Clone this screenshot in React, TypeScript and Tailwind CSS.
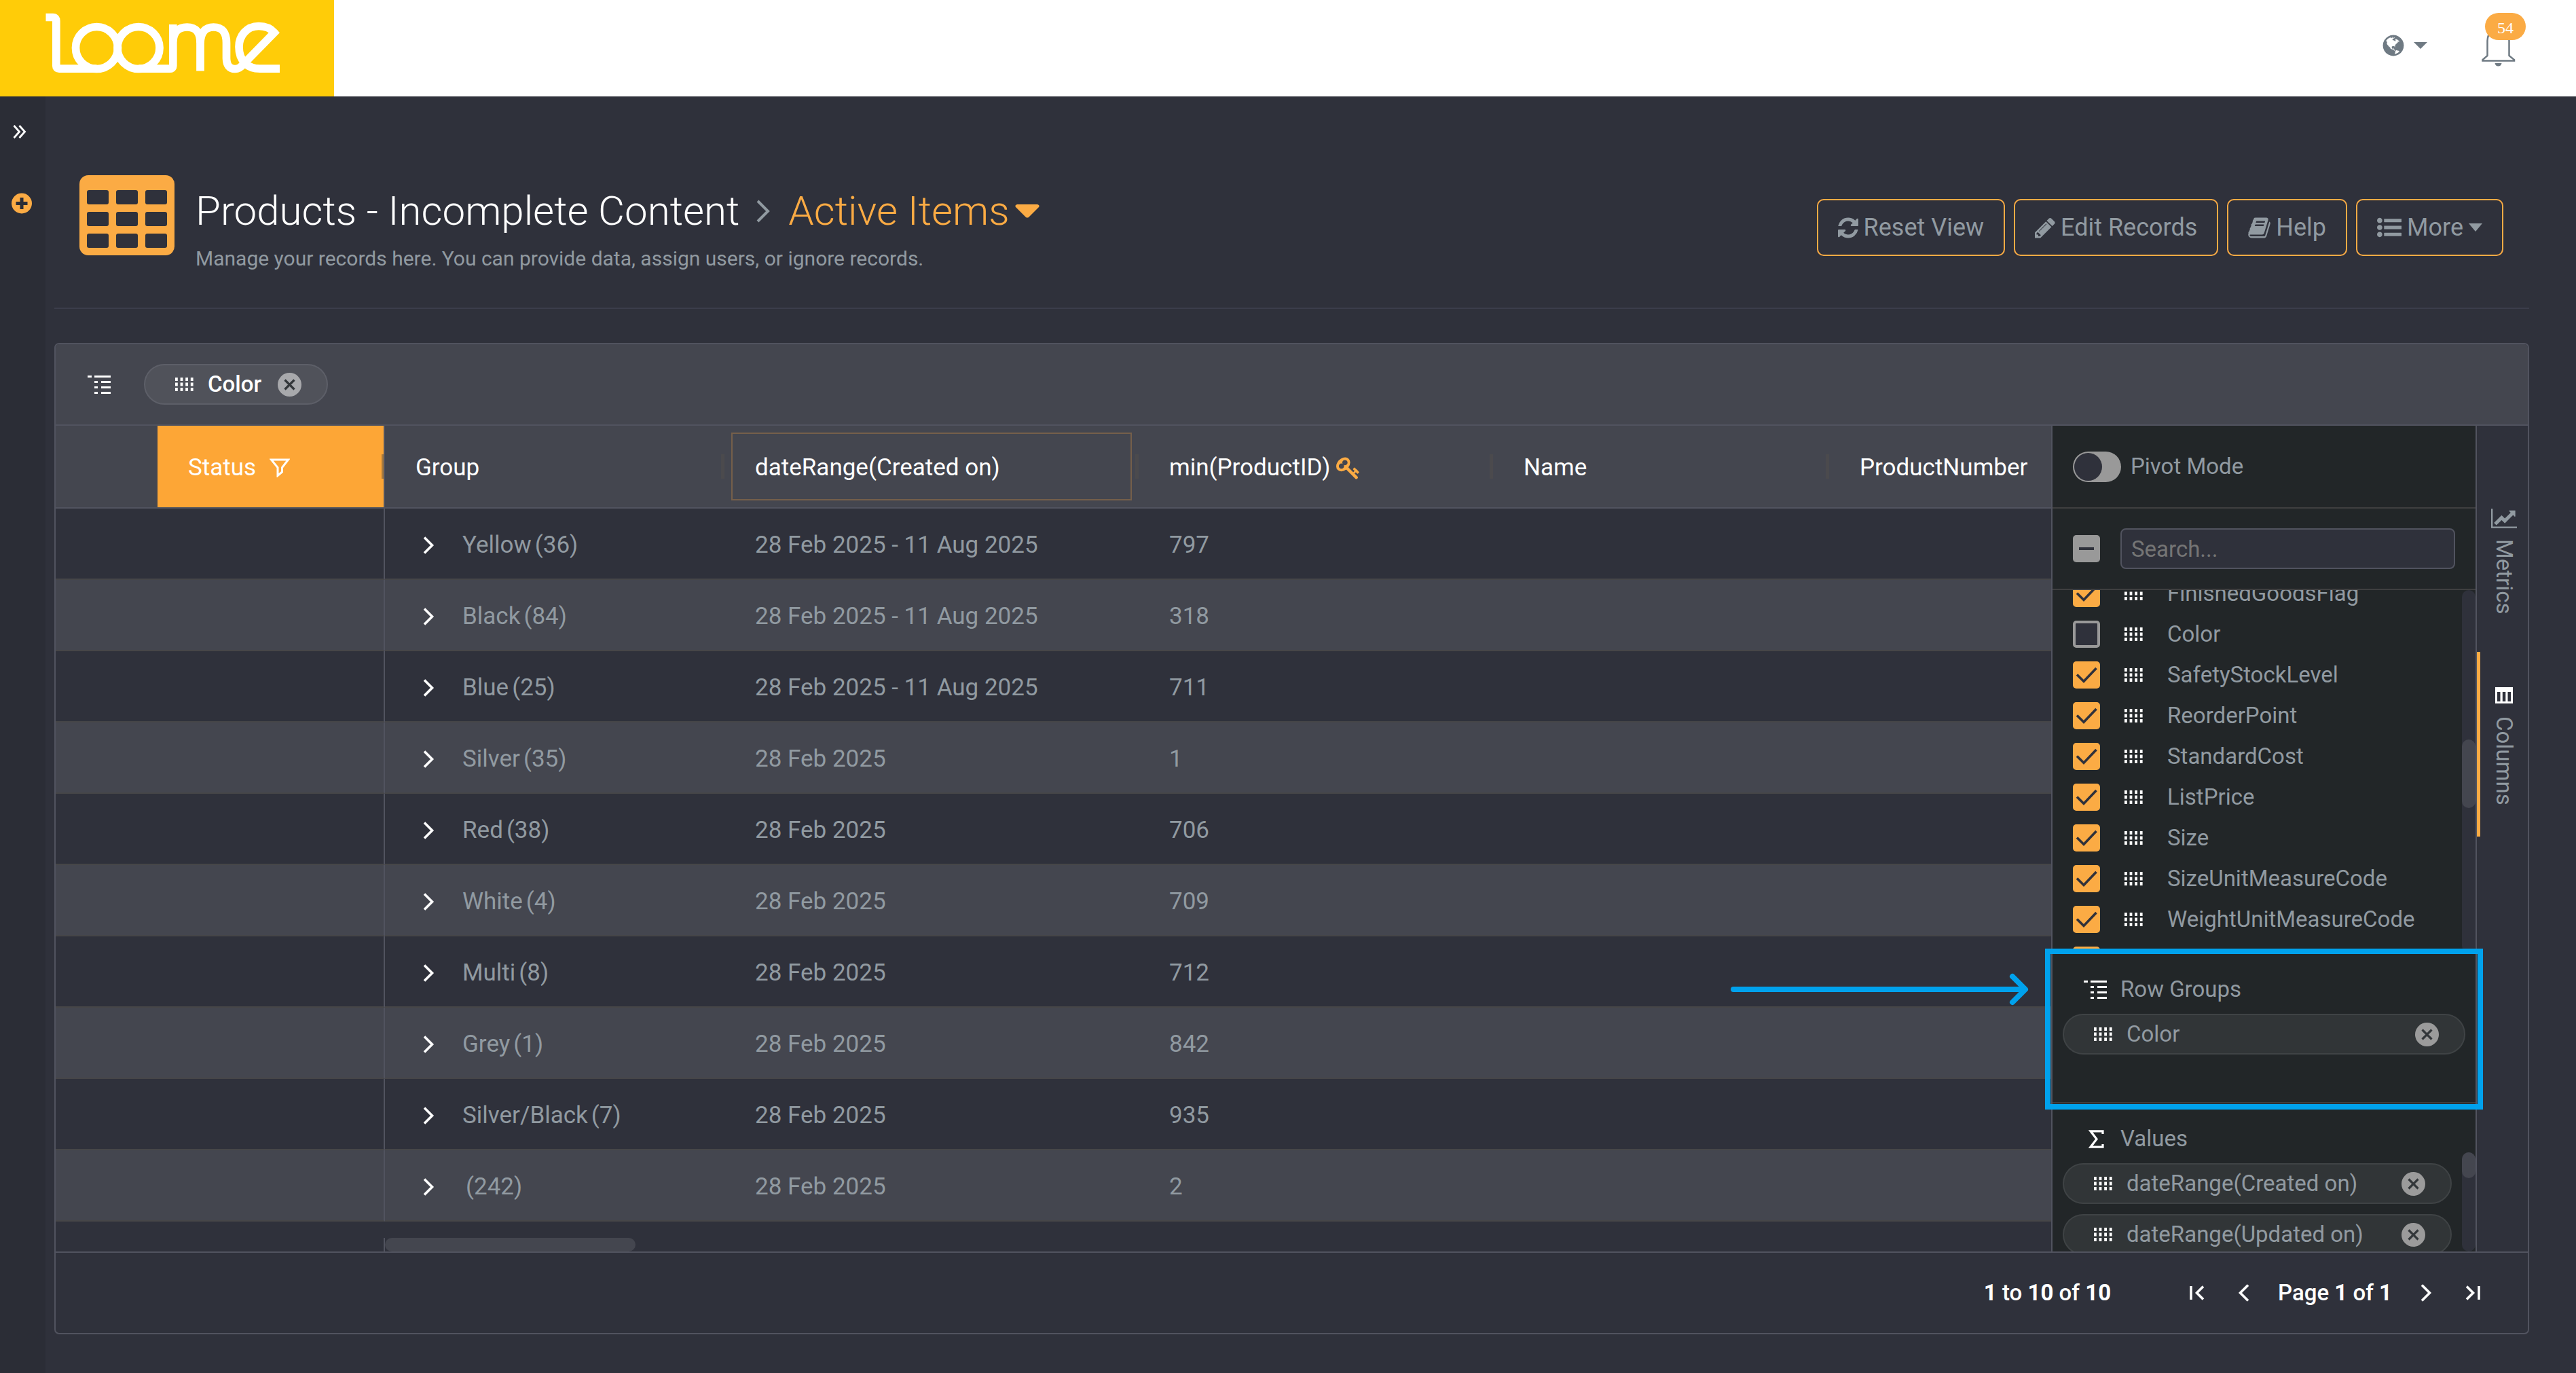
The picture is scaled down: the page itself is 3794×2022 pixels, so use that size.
import { useState } from "react";
import type { ReactNode } from "react";

const FA = {
  refresh:
    "M1639 1056q0 5-1 7-64 268-268 434.5t-478 166.5q-146 0-282.5-55t-243.5-157l-129 129q-19 19-45 19t-45-19-19-45v-448q0-26 19-45t45-19h448q26 0 45 19t19 45-19 45l-137 137q71 66 161 102t187 36q134 0 250-65t186-179q11-17 53-117 8-23 30-23h192q13 0 22.5 9.5t9.5 22.5zm25-800v448q0 26-19 45t-45 19h-448q-26 0-45-19t-19-45 19-45l138-138q-148-137-349-137-134 0-250 65t-186 179q-11 17-53 117-8 23-30 23h-199q-13 0-22.5-9.5t-9.5-22.5v-7q65-268 270-434.5t480-166.5q146 0 284 55.5t245 156.5l130-129q19-19 45-19t45 19 19 45z",
  pencil:
    "M491 1536l91-91-235-235-91 91v107h128v128h107zm523-928q0-22-22-22-10 0-17 7l-542 542q-7 7-7 17 0 22 22 22 10 0 17-7l542-542q7-7 7-17zm-54-192l416 416-832 832h-416v-416zm683 96q0 53-37 90l-166 166-416-416 166-165q36-38 90-38 53 0 91 38l235 234q37 39 37 91z",
  book: "M1703 478q40 57 18 129l-275 906q-19 64-76.5 107.5t-122.5 43.5h-923q-77 0-148.5-53.5t-99.5-131.5q-24-67-2-127 0-4 3-27t4-37q1-8-3-21.5t-3-19.5q2-11 8-21t16.5-23.5 16.5-23.5q23-38 45-91.5t30-91.5q3-10 .5-30t-.5-28q3-11 17-28t17-23q21-36 42-92t25-90q1-9-2.5-32t.5-28q4-13 22-30.5t22-22.5q19-26 42.5-84.5t27.5-96.5q1-8-3-25.5t-2-26.5q2-8 9-18t18-23 17-21q8-12 16.5-30.5t15-35 16-36 19.5-32 26.5-23.5 36-11.5 47.5 5.5l-1 3q38-9 51-9h761q74 0 114 56t18 130l-274 906q-36 119-71.5 153.5t-128.5 34.5h-869q-27 0-38 15-11 16-1 43 24 70 144 70h923q29 0 56-15.5t35-41.5l300-987q7-22 5-57 38 15 59 43zm-1064 2q-4 13 2 22.5t20 9.5h608q13 0 25.5-9.5t16.5-22.5l21-64q4-13-2-22.5t-20-9.5h-608q-13 0-25.5 9.5t-16.5 22.5zm-83 256q-4 13 2 22.5t20 9.5h608q13 0 25.5-9.5t16.5-22.5l21-64q4-13-2-22.5t-20-9.5h-608q-13 0-25.5 9.5t-16.5 22.5z",
  list: "M384 1408q0 80-56 136t-136 56-136-56-56-136 56-136 136-56 136 56 56 136zm0-512q0 80-56 136t-136 56-136-56-56-136 56-136 136-56 136 56 56 136zm1408 416v192q0 13-9.5 22.5t-22.5 9.5h-1216q-13 0-22.5-9.5t-9.5-22.5v-192q0-13 9.5-22.5t22.5-9.5h1216q13 0 22.5 9.5t9.5 22.5zm-1408-928q0 80-56 136t-136 56-136-56-56-136 56-136 136-56 136 56 56 136zm1408 416v192q0 13-9.5 22.5t-22.5 9.5h-1216q-13 0-22.5-9.5t-9.5-22.5v-192q0-13 9.5-22.5t22.5-9.5h1216q13 0 22.5 9.5t9.5 22.5zm0-512v192q0 13-9.5 22.5t-22.5 9.5h-1216q-13 0-22.5-9.5t-9.5-22.5v-192q0-13 9.5-22.5t22.5-9.5h1216q13 0 22.5 9.5t9.5 22.5z",
  key: "M832 512q0-80-56-136t-136-56-136 56-56 136q0 42 19 83-41-19-83-19-80 0-136 56t-56 136 56 136 136 56 136-56 56-136q0-42-19-83 41 19 83 19 80 0 136-56t56-136zm851 704q0 17-49 66t-66 49q-9 0-28.5-16t-36.5-33-38.5-40-24.5-26l-96 96 220 220q28 28 28 68 0 42-39 81t-81 39q-40 0-68-28l-671-671q-176 131-365 131-163 0-265.5-102.5t-102.5-265.5q0-160 95-313t248-248 313-95q163 0 265.5 102.5t102.5 265.5q0 189-131 365l355 355 96-96q-3-3-26-24.5t-40-38.5-33-36.5-16-28.5q0-17 49-66t66-49q13 0 23 10 6 6 46 44.5t83 79.5 86.5 86 64.5 74.5 24.5 41.5z",
  globe:
    "M896 128q209 0 385.5 103t279.5 279.5 103 385.5-103 385.5-279.5 279.5-385.5 103-385.5-103-279.5-279.5-103-385.5 103-385.5 279.5-279.5 385.5-103zm274 521q-2 1-9.5 9.5t-13.5 9.5q2 0 4.5-5t5-11 3.5-7q6-7 22-15 14-6 52-12 34-8 51 11-2-2 9.5-13t14.5-12q3-2 15-4.5t15-7.5l2-22q-12 1-17.5-7t-6.5-21q0 2-6 8 0-7-4.5-8t-11.5 1-9 1q-10-3-15-7.5t-8-16.5-4-15q-2-5-9.5-11t-9.5-10q-1-2-2.5-5.5t-3-6.5-4-5.5-5.5-2.5-7 5-7.5 10-4.5 5q-3-2-6-1.5t-4.5 1-4.5 3-5 3.5q-3 2-8.5 3t-8.5 2q15-5-1-11-10-4-16-3 9-4 7.5-12t-8.5-14h5q-1-4-8.5-8.5t-17.5-8.5-13-6q-8-5-34-9.5t-33-.5q-5 6-4.5 10.5t4 14 3.5 12.5q1 6-5.5 13t-6.5 12q0 7 14 15.5t10 21.5q-3 8-16 16t-16 12q-5 8-1.5 18.5t10.5 16.5q2 2 1.5 4t-3.5 4.5-5.5 4-6.5 3.5l-3 2q-11 5-20.5-6t-13.5-26q-7-25-16-30-23-8-29 1-5-13-41-26-25-9-58-4 6-1 0-15-7-15-19-12 3-6 4-17.5t1-13.5q3-13 12-23 1-1 7-8.5t9.5-13.5.5-6q35 4 50-11 5-5 11.5-17t10.5-17q9-6 14-5.5t14.5 5.5 14.5 5q14 1 15.5-11t-7.5-20q12 1 3-17-4-7-8-9-12-4-27 5-8 4 2 8-1-1-9.5 10.5t-16.5 17.5-16-5q-1-1-5.5-13.5t-9.5-13.5q-8 0-16 15 3-8-11-15t-24-8q19-12-8-27-7-4-20.5-5t-19.5 4q-5 7-5.5 11.5t5 8 10.5 5.5 11.5 4 8.5 3q14 10 8 14-2 1-8.5 3.5t-11.5 4.5-6 4q-3 4 0 14t-2 14q-5-5-9-17.5t-7-16.5q7 9-25 6l-10-1q-4 0-16 2t-20.5 1-13.5-8q-4-8 0-20 1-4 4-2-4-3-11-9.5t-10-8.5q-46 15-94 41 6 1 12-1 5-2 13-6.5t10-5.5q34-14 42-7l5-5q14 16 20 25-7-4-30-1-20 6-22 12 7 12 5 18-4-3-11.5-10t-14.5-11-15-5q-16 0-22 1-146 80-235 222 7 7 12 8 4 1 5 9t2.5 11 11.5-3q9 8 3 19 1-1 44 27 19 17 21 21 3 11-10 18-1-2-9-9t-9-4q-3 5 .5 18.5t10.5 12.5q-7 0-9.5 16t-2.5 35.5-1 23.5l2 1q-3 12 5.5 34.5t21.5 19.5q-13 3 20 43 6 8 8 9 3 2 12 7.5t15 10 10 10.5q4 5 10 22.5t14 23.5q-2 6 9.5 20t10.5 23q-1 0-2.5 1t-2.5 1q3 7 15.5 14t15.5 13q1 3 2 10t3 11 8 2q2-20-24-62-15-25-17-29-3-5-5.5-15.5t-4.5-14.5q2 0 6 1.5t8.5 3.5 7.5 4 2 3q-3 7 2 17.5t12 18.5 17 19 12 13q6 6 14 19.5t0 13.5q9 0 20 10.5t17 19.5q5 8 8 26t5 24q2 7 8.5 13.5t12.5 9.5l16 8 13 7q5 2 18.5 10.5t21.5 11.5q10 4 16 4t14.5-2.5 13.5-3.5q15-2 29 15t21 21q36 19 55 11-2 1 .5 7.5t8 15.5 9 14.5 5.5 8.5q5 6 18 15t18 15q6-4 7-9-3 8 7 20t18 10q14-3 14-32-31 15-49-18 0-1-2.5-5.5t-4-8.5-2.5-8.5 0-7.5 5-3q9 0 10-3.5t-2-12.5-4-13q-1-8-11-20t-12-15q-5 9-16 8t-16-9q0 1-1.5 5.5t-1.5 6.5q-13 0-15-1 1-3 2.5-17.5t3.5-22.5q1-4 5.5-12t7.5-14.5 4-12.5-4.5-9.5-17.5-2.5q-19 1-26 20-1 3-3 10.5t-5 11.5-9 7q-7 3-24 2t-24-5q-13-8-22.5-29t-9.5-37q0-10 2.5-26.5t3-25-5.5-24.5q3-2 9-9.5t10-10.5q2-1 4.5-1.5t4.5 0 4-1.5 3-6q-1-1-4-3-3-3-4-3 7 3 28.5-1.5t27.5 1.5q15 11 22-2 0-1-2.5-9.5t-.5-13.5q5 27 29 9 3 3 15.5 5t17.5 5q3 2 7 5.5t5.5 4.5 5-.5 8.5-6.5q10 14 12 24 11 40 19 44 7 3 11 2t4.5-9.5 0-14-1.5-12.5l-1-8v-18l-1-8q-15-3-18.5-12t1.5-18.5 15-18.5q1-1 8-3.5t15.5-6.5 12.5-8q21-19 15-35 7 0 11-9-1 0-5-3t-7.5-5-4.5-2q9-5 2-16 5-3 7.5-11t7.5-10q9 12 21 2 8-8 1-16 5-7 20.5-10.5t18.5-9.5q7 2 8-2t1-12 3-12q4-5 15-9t13-5l17-11q3-4 0-4 18 2 31-11 10-11-6-20 3-6-3-9.5t-15-5.5q3-1 11.5-.5t10.5-1.5q15-10-7-16-17-5-43 12zm-163 877q206-36 351-189-3-3-12.5-4.5t-12.5-3.5q-18-7-24-8 1-7-2.5-13t-8-9-12.5-8-11-7q-2-2-7-6t-7-5.5-7.5-4.5-8.5-2-10 1l-3 1q-3 1-5.5 2.5t-5.5 3-4 3 0 2.5q-21-17-36-22-5-1-11-5.5t-10.5-7-10-1.5-11.5 7q-5 5-6 15t-2 13q-7-5 0-17.5t2-18.5q-3-6-10.5-4.5t-12 4.5-11.5 8.5-9 6.5-8.5 5.5-8.5 7.5q-3 4-6 12t-5 11q-2-4-11.5-6.5t-9.5-5.5q2 10 4 35t5 38q7 31-12 48-27 25-29 40-4 22 12 26 0 7-8 20.5t-7 21.5q0 6 2 16z",
};

interface FaIconProps {
  d: string;
  className: string;
  viewBox?: string;
}

function FaIcon({ d, className, viewBox = "0 0 1792 1792" }: FaIconProps) {
  return (
    <svg viewBox={viewBox} fill="currentColor" className={`shrink-0 ${className}`} aria-hidden="true">
      <path d={d} />
    </svg>
  );
}

function Grip() {
  return (
    <svg width="27" height="20" viewBox="0 0 27 20" fill="#fff" className="shrink-0" aria-hidden="true">
      {[0, 7.5, 15].map((y) =>
        [0, 7.6, 15.2, 22.8].map((x) => <rect key={`${x}-${y}`} x={x} y={y} width="3.8" height="5" />)
      )}
    </svg>
  );
}

function GroupIcon() {
  return (
    <svg width="34" height="27" viewBox="0 0 34 27" fill="#fff" className="shrink-0" aria-hidden="true">
      <path d="M0 0h6v3H0zM10 0h24v3H10z" />
      <path d="M10 8h5v3h-5zM20 8h14v3H20zM10 16h5v3h-5zM20 16h14v3H20zM10 24h5v3h-5zM20 24h14v3H20z" />
    </svg>
  );
}

function RemoveButton({ label, color }: { label: string; color: string }) {
  return (
    <button type="button" aria-label={`Remove ${label}`} className="shrink-0">
      <svg width="35" height="35" viewBox="0 0 35 35">
        <circle cx="17.5" cy="17.5" r="17.5" fill={color} />
        <path d="M10.5 10.5l14 14m0-14l-14 14" stroke="#33373a" strokeWidth="3.2" />
      </svg>
    </button>
  );
}

function Chevron({ d, className }: { d: string; className: string }) {
  return (
    <svg viewBox="0 0 34 34" fill="none" stroke="currentColor" className={`shrink-0 ${className}`} aria-hidden="true">
      <path d={d} strokeWidth="3.6" />
    </svg>
  );
}

const RIGHT = "M10 5.5L21.5 17 10 28.5";
const LEFT = "M24 5.5L12.5 17 24 28.5";

/* ---------- Top bar ---------- */

function Logo() {
  return (
    <svg
      viewBox="0 0 380 120"
      className="ml-[50px] h-[120px] w-[380px]"
      fill="none"
      stroke="#fff"
      strokeWidth="11.7"
      role="img"
      aria-label="Loome"
    >
      <path d="M17.5 15.5H28Q32.800 15.500 32.800 21V87Q32.800 91.200 37 91.200H92.500" />
      <circle cx="92.500" cy="60.500" r="31" />
      <circle cx="154" cy="60.500" r="31" />
      <path d="M154 91.200h46.500q4.300 0 4.300-4.200V26" />
      <path d="M204.800 51Q206 30 225.500 30 245 30 245 53V94.500" />
      <path d="M245 53Q246 30 264.500 30 283.500 30 283.500 53V76Q284 91.500 296 91.500 303 91.500 308 85L354 38Q346 28.500 331 28.500C313 28.500 302 43 302 59 302 80 315 91.200 333 91.200H362" />
    </svg>
  );
}

function TopBar() {
  return (
    <header className="flex h-[142px] items-start justify-between bg-white">
      <div className="flex h-full w-[492px] items-start bg-[#ffcc08] pt-[10px]">
        <Logo />
      </div>
      <div className="flex items-start gap-[80px] pr-[74px] text-[#6f7a83]">
        <button type="button" aria-label="Language" className="mt-[49px] flex items-center gap-3">
          <FaIcon d={FA.globe} className="size-9" />
          <svg width="20" height="10" viewBox="0 0 20 10" fill="currentColor">
            <path d="M0 0h20L10 10z" />
          </svg>
        </button>
        <button type="button" aria-label="54 notifications" className="relative mt-[30px] w-[65px]">
          <svg width="50" height="70" viewBox="0 0 50 70" fill="none" stroke="currentColor" strokeWidth="2.500">
            <path d="M8.500 52V30Q9 20 15 15 20 9 24.500 9 30 9 35 15 40.500 20 40.500 30V52l7.500 6v1.500H1.500V58z" />
            <path d="M19.500 63h10q-1 4.500-5 4.500t-5-4.500z" fill="currentColor" stroke="none" />
          </svg>
          <span className="absolute -top-[11px] right-0 flex h-[40px] w-[60px] items-center justify-center rounded-full bg-[#fbab44] pt-1 font-[Liberation_Serif,serif] text-[24px] leading-none text-white">
            54
          </span>
        </button>
      </div>
    </header>
  );
}

/* ---------- Page heading ---------- */

function OutlineButton({ children }: { children: ReactNode }) {
  return (
    <button
      type="button"
      className="flex h-[84px] items-center gap-2 rounded-[10px] border-2 border-[#fbab44] px-[29px] text-[36px] leading-[40px]"
    >
      {children}
    </button>
  );
}

function PageHeading() {
  return (
    <div className="flex h-[313px] items-start border-b-2 border-[#3b3d4b] pt-[116px] pr-[38px] pl-[37px]">
      <svg width="140" height="118" viewBox="0 0 140 118" className="shrink-0" aria-hidden="true">
        <rect width="140" height="118" rx="13" fill="#fbab44" />
        {[22, 54, 86].map((y) =>
          [11, 54, 97].map((x) => (
            <rect key={`${x}-${y}`} x={x} y={y} width="32" height="21" rx="3" fill="#2f313b" />
          ))
        )}
      </svg>
      <div className="ml-[31px] pt-[17px]">
        <h1 className="flex items-center text-[60px] leading-[72px] font-light text-white">
          Products - Incomplete Content
          <svg width="20" height="34" viewBox="0 0 20 34" fill="none" stroke="#919aa1" strokeWidth="4" className="mr-[27px] ml-[25px]">
            <path d="M2 2l15 15L2 32" />
          </svg>
          <button type="button" className="flex items-center gap-2 text-[#fbab44]">
            Active Items
            <svg width="36" height="20" viewBox="0 0 36 20" fill="currentColor">
              <path d="M3 0h30q4 1 2 4L20 19q-2 1-4 0L1 4Q-1 1 3 0z" />
            </svg>
          </button>
        </h1>
        <p className="mt-[14px] text-[30px] leading-[40px]">
          Manage your records here. You can provide data, assign users, or ignore records.
        </p>
      </div>
      <div className="mt-[35px] ml-auto flex gap-[13px]">
        <OutlineButton>
          <FaIcon d={FA.refresh} viewBox="128 0 1536 1792" className="h-[35px] w-[30px]" />
          Reset View
        </OutlineButton>
        <OutlineButton>
          <FaIcon d={FA.pencil} viewBox="128 0 1536 1792" className="h-[35px] w-[30px]" />
          Edit Records
        </OutlineButton>
        <OutlineButton>
          <FaIcon d={FA.book} viewBox="64 0 1664 1792" className="h-[35px] w-[33px]" />
          Help
        </OutlineButton>
        <OutlineButton>
          <FaIcon d={FA.list} className="size-9" />
          More
          <svg width="20" height="12" viewBox="0 0 20 12" fill="currentColor">
            <path d="M0 0h20L10 12z" />
          </svg>
        </OutlineButton>
      </div>
    </div>
  );
}

/* ---------- Grid ---------- */

const rows = [
  { name: "Yellow", count: 36, range: "28 Feb 2025 - 11 Aug 2025", id: 797 },
  { name: "Black", count: 84, range: "28 Feb 2025 - 11 Aug 2025", id: 318 },
  { name: "Blue", count: 25, range: "28 Feb 2025 - 11 Aug 2025", id: 711 },
  { name: "Silver", count: 35, range: "28 Feb 2025", id: 1 },
  { name: "Red", count: 38, range: "28 Feb 2025", id: 706 },
  { name: "White", count: 4, range: "28 Feb 2025", id: 709 },
  { name: "Multi", count: 8, range: "28 Feb 2025", id: 712 },
  { name: "Grey", count: 1, range: "28 Feb 2025", id: 842 },
  { name: "Silver/Black", count: 7, range: "28 Feb 2025", id: 935 },
  { name: "", count: 242, range: "28 Feb 2025", id: 2 },
];

function ResizeHandle() {
  return <span className="absolute top-[42px] right-0 h-[36px] w-[5px] bg-[#4b4a4d]" />;
}

function GroupPanel() {
  return (
    <div className="flex h-[120px] items-center gap-[49px] border-b-2 border-[#51535f] bg-[#44464f] pl-[47px]">
      <GroupIcon />
      <div className="flex h-[60px] items-center rounded-full border-2 border-[#5d5f68] bg-[#50525a] pr-[37px] pl-[44px]">
        <Grip />
        <span className="mr-[24px] ml-[21px] text-[33px] leading-[40px] font-medium text-white">Color</span>
        <RemoveButton label="Color" color="#a8a9ac" />
      </div>
    </div>
  );
}

function DataGrid() {
  return (
    <div className="min-w-0 flex-1 overflow-hidden">
      <table className="w-full table-fixed border-separate border-spacing-0 text-left text-[35px] leading-[40px]">
        <colgroup>
          <col className="w-[150px]" />
          <col className="w-[335px]" />
          <col className="w-[500px]" />
          <col className="w-[610px]" />
          <col className="w-[522px]" />
          <col className="w-[495px]" />
          <col />
        </colgroup>
        <thead className="text-white">
          <tr className="h-[122px] bg-[#44464f] [&>th]:border-b-2 [&>th]:border-[#51535f] [&>th]:p-0 [&>th]:font-normal">
            <th aria-label="Select" />
            <th className="relative border-r-2 bg-[#fda636]">
              <div className="flex items-center gap-[20px] pt-1 pl-[45px]">
                Status
                <svg width="30" height="28" viewBox="0 0 30 28" fill="none" stroke="#fff" strokeWidth="3">
                  <path d="M2.500 2h25L18.500 13.500v6.500l-6.500 5.500V13.500z" />
                </svg>
              </div>
              <span className="absolute top-[42px] right-0 h-[36px] w-[3px] bg-[#a97a3e]" />
            </th>
            <th className="relative">
              <div className="pt-1 pl-[45px]">Group</div>
              <ResizeHandle />
            </th>
            <th className="relative">
              <div className="mx-[10px] flex h-[100px] items-center border-2 border-[#755f4a] pt-1 pl-[33px]">
                dateRange(Created on)
              </div>
              <ResizeHandle />
            </th>
            <th className="relative">
              <div className="flex items-center gap-2 pt-1 pl-[45px]">
                min(ProductID)
                <FaIcon d={FA.key} className="size-9 text-[#fbab44]" />
              </div>
              <ResizeHandle />
            </th>
            <th className="relative">
              <div className="pt-1 pl-[45px]">Name</div>
              <ResizeHandle />
            </th>
            <th>
              <div className="pt-1 pl-[45px]">ProductNumber</div>
            </th>
          </tr>
        </thead>
        <tbody>
          {rows.map((row) => (
            <tr
              key={row.id}
              className="h-[105px] even:bg-[#44464f] [&>td]:border-b-2 [&>td]:border-b-[#464648] [&>td]:p-0"
            >
              <td />
              <td className="border-r-2 border-r-[#51535f]" />
              <td>
                <button type="button" className="flex items-center pt-1 pl-[48px]">
                  <Chevron d={RIGHT} className="size-[34px] text-white" />
                  <span className="ml-[32px]">{row.name}</span>
                  <span className="ml-[5px]">({row.count})</span>
                </button>
              </td>
              <td>
                <div className="pt-1 pl-[45px]">{row.range}</div>
              </td>
              <td>
                <div className="pt-1 pl-[45px]">{row.id}</div>
              </td>
              <td />
              <td />
            </tr>
          ))}
        </tbody>
      </table>
      {/* horizontal scrollbar */}
      <div className="mt-[24px] flex h-[20px]">
        <div className="w-[485px] border-r-2 border-[#51535f]" />
        <div className="w-[369px] rounded-full bg-[#44464f]" />
      </div>
    </div>
  );
}

/* ---------- Columns tool panel ---------- */

const initialColumns = [
  { name: "FinishedGoodsFlag", checked: true },
  { name: "Color", checked: false },
  { name: "SafetyStockLevel", checked: true },
  { name: "ReorderPoint", checked: true },
  { name: "StandardCost", checked: true },
  { name: "ListPrice", checked: true },
  { name: "Size", checked: true },
  { name: "SizeUnitMeasureCode", checked: true },
  { name: "WeightUnitMeasureCode", checked: true },
  { name: "Weight", checked: true },
];

function Checkbox({ checked, onChange, id }: { checked: boolean; onChange: () => void; id: string }) {
  return (
    <span className="relative size-[40px] shrink-0">
      <input
        id={id}
        type="checkbox"
        checked={checked}
        onChange={onChange}
        className="block size-[40px] appearance-none rounded-[5px] border-4 border-[#999] bg-[#2f313b] checked:border-[#fbab44] checked:bg-[#fbab44]"
      />
      {checked && (
        <svg viewBox="0 0 40 40" className="pointer-events-none absolute inset-0" fill="none" stroke="#2f313b" strokeWidth="3.600">
          <path d="M6 19.500l10 10L34.500 10" />
        </svg>
      )}
    </span>
  );
}

function Chip({ label }: { label: string }) {
  return (
    <li className="flex h-[60px] shrink-0 items-center rounded-full border-2 border-[#3f4345] bg-[#313537] pr-[37px] pl-[44px]">
      <Grip />
      <span className="ml-[21px] flex-1">{label}</span>
      <RemoveButton label={label} color="#9b9b9b" />
    </li>
  );
}

function ColumnsPanel() {
  const [columns, setColumns] = useState(initialColumns);
  const [pivot, setPivot] = useState(false);

  const toggle = (name: string) =>
    setColumns(columns.map((c) => (c.name === name ? { ...c, checked: !c.checked } : c)));

  return (
    <section className="w-[627px] shrink-0 border-x-2 border-[#51535f] bg-[#222628] text-[33px] leading-[40px]">
      <label className="flex h-[122px] items-center gap-[14px] border-b-2 border-[#3f3f40] pl-[30px]">
        <input
          type="checkbox"
          role="switch"
          checked={pivot}
          onChange={() => setPivot(!pivot)}
          className="h-[45px] w-[71px] appearance-none rounded-full bg-[#999] p-[2px] before:block before:size-[41px] before:rounded-full before:bg-[#2f313b] checked:bg-[#fbab44] checked:before:ml-auto"
        />
        Pivot Mode
      </label>

      <div className="flex h-[120px] items-center gap-[30px] border-b-2 border-[#3f3f40] px-[30px]">
        <span className="relative size-[40px] shrink-0">
          <input
            type="checkbox"
            aria-label="Toggle all columns"
            className="block size-[40px] appearance-none rounded-[5px] bg-[#999]"
          />
          <span className="pointer-events-none absolute top-[18px] left-[9px] h-1 w-[22px] bg-[#2f313b]" />
        </span>
        <input
          type="text"
          aria-label="Search columns"
          placeholder="Search..."
          className="h-[60px] min-w-0 flex-1 rounded-[8px] border-2 border-[#51535f] bg-[#2f313b] px-[14px] placeholder:text-[#757575]"
        />
      </div>

      <div className="flex h-[536px] overflow-hidden border-b-2 border-[#3f3f40]">
        <ul className="-mt-[25px] flex-1">
          {columns.map((col) => (
            <li key={col.name} className="flex h-[60px] items-center pl-[30px]">
              <Checkbox id={`col-${col.name}`} checked={col.checked} onChange={() => toggle(col.name)} />
              <span className="mx-[36px]">
                <Grip />
              </span>
              <label htmlFor={`col-${col.name}`}>{col.name}</label>
            </li>
          ))}
        </ul>
        <div className="w-[20px] rounded-full bg-[#2f313b] pt-[220px]">
          <div className="h-[101px] rounded-full bg-[#44464f]" />
        </div>
      </div>

      <div className="relative h-[220px] border-b-2 border-[#3f3f40] pt-[32px]">
        <h2 className="flex items-center gap-[20px] pl-[46px]">
          <GroupIcon />
          Row Groups
        </h2>
        <ul className="px-[15px] pt-4">
          <Chip label="Color" />
        </ul>
        {/* highlight box and arrow */}
        <div className="pointer-events-none absolute -top-2 -right-[11px] -bottom-[11px] -left-[11px] z-10 border-8 border-[#00a2ed]" />
        <svg
          width="440"
          height="48"
          viewBox="0 0 440 48"
          className="pointer-events-none absolute top-[28px] right-full mr-[35px]"
          fill="none"
          stroke="#00a2ed"
          strokeWidth="8"
          strokeLinecap="round"
          strokeLinejoin="round"
        >
          <path d="M5 24h429M416 5l19 19-19 19" />
        </svg>
      </div>

      <div className="h-[218px] overflow-hidden pt-[32px]">
        <h2 className="flex items-center gap-[20px] pl-[46px]">
          <svg width="34" height="27" viewBox="0 0 34 27" fill="none" stroke="#fff" strokeWidth="3.200" aria-hidden="true">
            <path d="M28 6V1.800H10L19 13.500 10 25.200h18V21" />
          </svg>
          Values
        </h2>
        <div className="flex h-[146px] overflow-hidden">
          <ul className="flex flex-1 flex-col gap-[15px] px-[15px] pt-4">
            <Chip label="dateRange(Created on)" />
            <Chip label="dateRange(Updated on)" />
          </ul>
          <div className="w-[20px] rounded-full bg-[#2f313b]">
            <div className="h-[38px] rounded-full bg-[#44464f]" />
          </div>
        </div>
      </div>
    </section>
  );
}

function SideTabs() {
  return (
    <nav className="flex w-[75px] shrink-0 flex-col gap-[7px] pt-[70px] text-[33px] leading-[40px]">
      <button type="button" className="flex flex-col items-center gap-[16px] border-l-[5px] border-transparent pt-[52px] pb-[48px]">
        <svg width="38" height="29" viewBox="0 128 2048 1536" fill="currentColor" aria-hidden="true">
          <path d="M2048 1536v128h-2048v-1536h128v1408h1920zm-128-1248v435q0 21-19.500 29.500t-35.500-7.500l-121-121-633 633q-10 10-23 10t-23-10l-233-233-416 416-192-192 585-585q10-10 23-10t23 10l233 233 464-464-121-121q-16-16-7.500-35.500t29.500-19.500h435q14 0 23 9t9 23z" />
        </svg>
        <span className="[writing-mode:vertical-rl]">Metrics</span>
      </button>
      <button type="button" className="flex flex-col items-center gap-[19px] border-l-[5px] border-[#fbab44] pt-[52px] pb-[47px]">
        <svg width="26" height="24" viewBox="0 0 26 24" fill="#fff" aria-hidden="true">
          <path fillRule="evenodd" d="M0 0h26v24H0zM3 7v14h4.500V7zM10.800 7v14h4.500V7zM18.500 7v14H23V7z" />
        </svg>
        <span className="[writing-mode:vertical-rl]">Columns</span>
      </button>
    </nav>
  );
}

function Pagination() {
  return (
    <div className="flex h-[120px] items-center justify-end gap-[34px] border-t-2 border-[#51535f] pr-[64px] text-[33px] leading-[40px] font-medium text-white">
      <span className="mr-[76px]">
        <b>1</b> to <b>10</b> of <b>10</b>
      </span>
      <button type="button" aria-label="First page">
        <Chevron d="M8 7v20M26 7.500L16.500 17l9.500 9.500" className="size-[34px]" />
      </button>
      <button type="button" aria-label="Previous page">
        <Chevron d={LEFT} className="size-[34px]" />
      </button>
      <span>
        Page <b>1</b> of <b>1</b>
      </span>
      <button type="button" aria-label="Next page">
        <Chevron d={RIGHT} className="size-[34px]" />
      </button>
      <button type="button" aria-label="Last page">
        <Chevron d="M26 7v20M8 7.500L17.500 17 8 26.500" className="size-[34px]" />
      </button>
    </div>
  );
}

export default function App() {
  return (
    <div className="flex min-h-screen flex-col bg-[#2f313b] font-[Roboto,sans-serif] text-[#919aa1]">
      <TopBar />
      <div className="flex flex-1">
        <aside className="w-[67px] shrink-0 bg-[#2b2d36]">
          <button type="button" aria-label="Expand menu" className="mt-[42px] ml-[19px] block">
            <svg width="20" height="20" viewBox="0 0 20 20" fill="none" stroke="#fff" strokeWidth="2.800">
              <path d="M1.500 1l8 9-8 9M9.500 1l8 9-8 9" />
            </svg>
          </button>
          <button type="button" aria-label="Add" className="mt-[80px] ml-[17px] block">
            <svg width="30" height="31" viewBox="0 0 30 31">
              <circle cx="15" cy="15.500" r="15" fill="#fbab44" />
              <path d="M15 7v17M6.500 15.500h17" stroke="#2b2d36" strokeWidth="5" />
            </svg>
          </button>
        </aside>
        <main className="min-w-0 flex-1 pr-[69px] pb-[57px] pl-[13px]">
          <PageHeading />
          <div className="mt-[50px] overflow-hidden rounded-[7px] border-2 border-[#51535f]">
            <GroupPanel />
            <div className="flex">
              <DataGrid />
              <ColumnsPanel />
              <SideTabs />
            </div>
            <Pagination />
          </div>
        </main>
      </div>
    </div>
  );
}
